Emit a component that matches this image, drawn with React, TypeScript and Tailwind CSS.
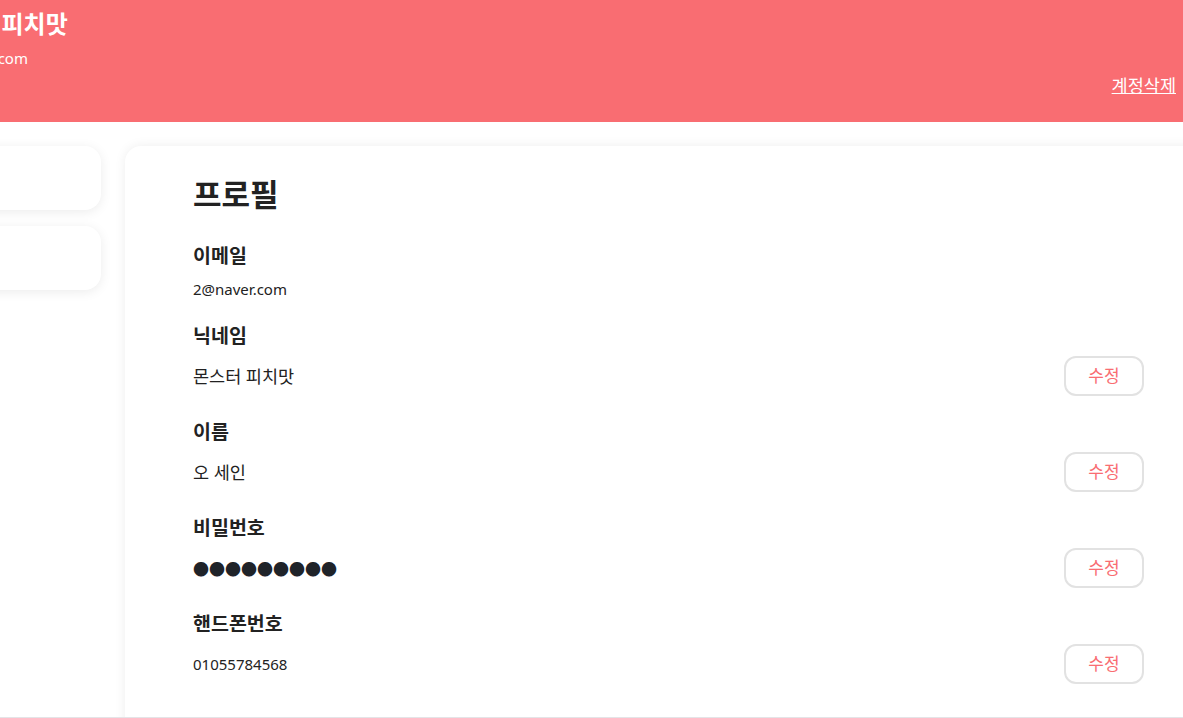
import React from "react";

const font = { fontFamily: '"Noto Sans", "Noto Sans CJK KR", sans-serif' };

type Field = { label: string; value: string; editable: boolean; kind?: "dots" | "ko" | "latin" };

const fields: Field[] = [
  { label: "이메일", value: "2@naver.com", editable: false, kind: "latin" },
  { label: "닉네임", value: "몬스터 피치맛", editable: true, kind: "ko" },
  { label: "이름", value: "오 세인", editable: true, kind: "ko" },
  { label: "비밀번호", value: "●●●●●●●●●", editable: true, kind: "dots" },
  { label: "핸드폰번호", value: "01055784568", editable: true, kind: "latin" },
];

function valueClass(kind?: string) {
  if (kind === "dots") return "text-[16px] leading-[22px] text-[#1f2329] font-['Noto_Sans_CJK_KR']";
  if (kind === "ko") return "text-[17.5px] leading-[22px] text-[#222]";
  return "text-[15px] leading-[22px] text-[#222]";
}

function ProfileRow({ field }: { field: Field }) {
  return (
    <div className="flex flex-col mb-[23px]">
      <span className="text-[19.5px] leading-[26px] font-semibold text-[#222]">{field.label}</span>
      {field.editable ? (
        <div className="flex items-center justify-between mt-[7px] h-[40px]">
          <span className={valueClass(field.kind)}>{field.value}</span>
          <button className="w-[80px] h-[40px] rounded-[12px] border-2 border-[#e2e2e2] bg-white text-[17px] text-[#f96d72]">
            수정
          </button>
        </div>
      ) : (
        <span className={"mt-[9px] " + valueClass(field.kind)}>{field.value}</span>
      )}
    </div>
  );
}

export default function App() {
  return (
    <div className="w-full h-[718px] overflow-hidden bg-white border-b border-[#e4e4e7]" style={font}>
      <div className="w-[1340px] -ml-[100px]">
        {/* header */}
        <div className="h-[122px] bg-[#f96d72] pl-[29px] pr-[64px] pt-[8px] flex flex-col text-white">
          <h1 className="text-[24px] leading-[32px] font-bold">몬스터 피치맛</h1>
          <p className="mt-[7px] ml-[5px] text-[15px] leading-[22px]">2@naver.com</p>
          <div className="flex justify-end mt-[4px]">
            <a className="text-[17.5px] leading-[24px] underline cursor-pointer">계정삭제</a>
          </div>
        </div>

        {/* body */}
        <div className="flex gap-[24px] px-[30px] pt-[24px]">
          <div className="w-[171px] flex flex-col gap-[16px]">
            <div className="h-[64px] rounded-2xl bg-white shadow-[0_2px_12px_rgba(0,0,0,0.08)]" />
            <div className="h-[64px] rounded-2xl bg-white shadow-[0_2px_12px_rgba(0,0,0,0.08)]" />
          </div>
          <div className="flex-1 rounded-2xl bg-white shadow-[0_0_12px_rgba(0,0,0,0.07)] pl-[68px] pr-[66px] pt-[30px] pb-[80px]">
            <h2 className="text-[31px] leading-[36px] font-bold text-[#222] mb-[31px]">프로필</h2>
            {fields.map((f) => (
              <ProfileRow key={f.label} field={f} />
            ))}
          </div>
        </div>
      </div>
    </div>
  );
}
